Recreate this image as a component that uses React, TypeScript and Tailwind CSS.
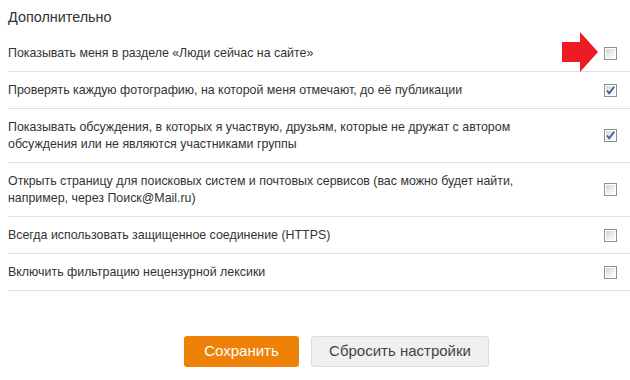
import React from "react";

const Box = ({ checked }: { checked?: boolean }) => (
  <svg width="13" height="13" viewBox="0 0 13 13" className="block shrink-0">
    <defs>
      <linearGradient id={checked ? "gc" : "gu"} x1="0" y1="0" x2="1" y2="1">
        <stop offset="0" stopColor="#d6d6d9" />
        <stop offset="1" stopColor="#ffffff" />
      </linearGradient>
    </defs>
    <rect x="0.5" y="0.5" width="12" height="12" fill="#ffffff" stroke="#8e8f8f" />
    <rect x="2" y="2" width="9" height="9" fill={`url(#${checked ? "gc" : "gu"})`} />
    {checked && (
      <path d="M3 6.5 L5.2 9.2 L10.2 2.8" fill="none" stroke="#3a5aa8" strokeWidth="1.8" />
    )}
  </svg>
);

const rows: { lines: string[]; checked: boolean; arrow?: boolean }[] = [
  { lines: ["Показывать меня в разделе «Люди сейчас на сайте»"], checked: false, arrow: true },
  { lines: ["Проверять каждую фотографию, на которой меня отмечают, до её публикации"], checked: true },
  {
    lines: [
      "Показывать обсуждения, в которых я участвую, друзьям, которые не дружат с автором",
      "обсуждения или не являются участниками группы",
    ],
    checked: true,
  },
  {
    lines: [
      "Открыть страницу для поисковых систем и почтовых сервисов (вас можно будет найти,",
      "например, через Поиск@Mail.ru)",
    ],
    checked: false,
  },
  { lines: ["Всегда использовать защищенное соединение (HTTPS)"], checked: false },
  { lines: ["Включить фильтрацию нецензурной лексики"], checked: false },
];

export default function App() {
  return (
    <div
      className="w-[630px] h-[380px] bg-white text-[#333333] overflow-hidden"
      style={{ fontFamily: '"Liberation Sans", Arial, sans-serif' }}
    >
      <div className="pl-[8px]">
        <div className="pt-[8px] h-[35px] text-[14.4px] leading-[18px]">Дополнительно</div>
        <div>
          {rows.map((r, i) => (
            <div
              key={i}
              className="relative flex items-center justify-between border-b border-[#e0e0e0] py-[10px] pr-[13px] text-[12.4px] leading-[16px]"
            >
              <div className={r.lines.length > 1 ? "leading-[17px] -my-[0.5px]" : ""}>
                {r.lines.map((l, j) => (
                  <div key={j} className="whitespace-nowrap">
                    {l}
                  </div>
                ))}
              </div>
              <Box checked={r.checked} />
              {r.arrow && (
                <svg
                  width="36"
                  height="40"
                  viewBox="0 0 36 40"
                  className="absolute left-[554px] top-[-3px]"
                >
                  <polygon points="0,10 18,10 18,0 36,20 18,40 18,30 0,30" fill="#ed1c24" />
                </svg>
              )}
            </div>
          ))}
        </div>
      </div>
      <div className="flex gap-[12px] pl-[184px] pt-[45px]">
        <button className="w-[115px] h-[31px] rounded-[3px] bg-[#ee8208] text-white text-[15px]">
          Сохранить
        </button>
        <button className="w-[178px] h-[31px] rounded-[3px] bg-[#f0f0f0] border border-[#dcdcdc] text-[#444] text-[15px]">
          Сбросить настройки
        </button>
      </div>
    </div>
  );
}
